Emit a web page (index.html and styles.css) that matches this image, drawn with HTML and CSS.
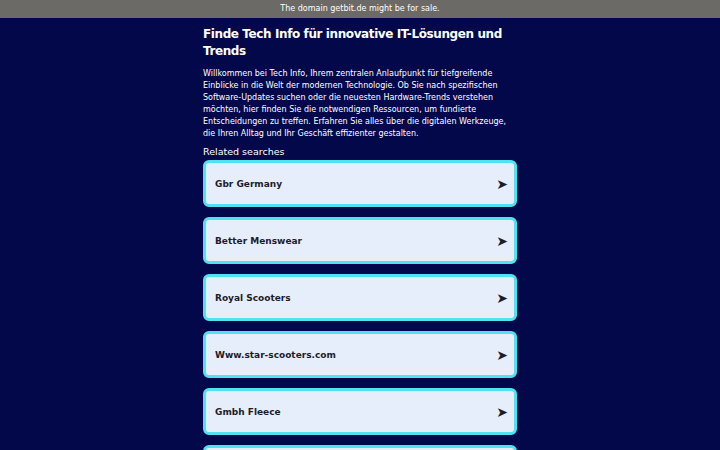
FILE: index.html
```html
<!DOCTYPE html>
<html lang="de">
<head>
<meta charset="utf-8">
<title>Tech Info</title>
<link rel="stylesheet" href="styles.css">
</head>
<body>
<div class="topbar">The domain getbit.de might be for sale.</div>
<main class="content">
  <h1 class="title">Finde Tech Info für innovative IT-Lösungen und Trends</h1>
  <p class="intro">Willkommen bei Tech Info, Ihrem zentralen Anlaufpunkt für tiefgreifende Einblicke in die Welt der modernen Technologie. Ob Sie nach spezifischen Software-Updates suchen oder die neuesten Hardware-Trends verstehen möchten, hier finden Sie die notwendigen Ressourcen, um fundierte Entscheidungen zu treffen. Erfahren Sie alles über die digitalen Werkzeuge, die Ihren Alltag und Ihr Geschäft effizienter gestalten.</p>
  <div class="related">Related searches</div>
  <ul class="links">
    <li class="link"><span>Gbr Germany</span><span class="arrow">➤</span></li>
    <li class="link"><span>Better Menswear</span><span class="arrow">➤</span></li>
    <li class="link"><span>Royal Scooters</span><span class="arrow">➤</span></li>
    <li class="link"><span>Www.star-scooters.com</span><span class="arrow">➤</span></li>
    <li class="link"><span>Gmbh Fleece</span><span class="arrow">➤</span></li>
    <li class="link"><span>Scooter Shop</span><span class="arrow">➤</span></li>
  </ul>
</main>
</body>
</html>
```
FILE: styles.css
```css
html, body {
  margin: 0;
  padding: 0;
}
body {
  background: #03084b;
  font-family: "DejaVu Sans", sans-serif;
  color: #ffffff;
  overflow: hidden;
}
.topbar {
  height: 18px;
  line-height: 18px;
  background: #6b6a66;
  color: #ffffff;
  font-size: 8px;
  text-align: center;
}
.content {
  width: 314px;
  margin: 0 auto;
  padding-top: 8px;
}
.title {
  font-size: 12px;
  line-height: 17px;
  letter-spacing: -0.4px;
  font-weight: bold;
  margin: 0 0 8px 0;
}
.intro {
  font-size: 8px;
  line-height: 12px;
  margin: 0 0 6px 0;
}
.related {
  font-size: 9.5px;
  line-height: 12px;
  margin-bottom: 2px;
}
.links {
  list-style: none;
  margin: 0;
  padding: 0;
  display: flex;
  flex-direction: column;
  gap: 10px;
}
.link {
  height: 41px;
  border: 3px solid #4fe3f2;
  border-radius: 6px;
  background: #e6eefc;
  color: #1c1c2a;
  font-size: 9px;
  font-weight: bold;
  display: flex;
  align-items: center;
  justify-content: space-between;
  padding: 0 6px 0 9px;
}
.arrow {
  font-size: 14px;
  font-weight: normal;
  color: #1c1c2a;
}
```
